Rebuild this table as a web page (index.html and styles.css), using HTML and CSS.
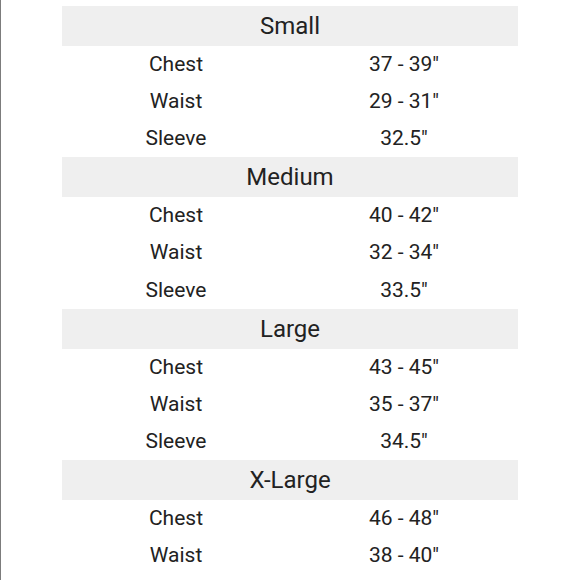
FILE: index.html
```
<!DOCTYPE html>
<html lang="en">
<head>
<meta charset="utf-8">
<title>Size Chart</title>
<link rel="stylesheet" href="styles.css">
</head>
<body>
<div class="page">
  <div class="chart">
    <section class="group">
      <div class="size">Small</div>
      <div class="row"><span>Chest</span><span>37 - 39"</span></div>
      <div class="row"><span>Waist</span><span>29 - 31"</span></div>
      <div class="row"><span>Sleeve</span><span>32.5"</span></div>
    </section>
    <section class="group">
      <div class="size">Medium</div>
      <div class="row"><span>Chest</span><span>40 - 42"</span></div>
      <div class="row"><span>Waist</span><span>32 - 34"</span></div>
      <div class="row"><span>Sleeve</span><span>33.5"</span></div>
    </section>
    <section class="group">
      <div class="size">Large</div>
      <div class="row"><span>Chest</span><span>43 - 45"</span></div>
      <div class="row"><span>Waist</span><span>35 - 37"</span></div>
      <div class="row"><span>Sleeve</span><span>34.5"</span></div>
    </section>
    <section class="group">
      <div class="size">X-Large</div>
      <div class="row"><span>Chest</span><span>46 - 48"</span></div>
      <div class="row"><span>Waist</span><span>38 - 40"</span></div>
    </section>
  </div>
</div>
</body>
</html>
```
FILE: styles.css
```
html, body {
  margin: 0;
  padding: 0;
  background: #ffffff;
}
body {
  font-family: Roboto, "Liberation Sans", sans-serif;
  color: #222222;
  overflow: hidden;
}
.page {
  height: 580px;
  border-left: 1px solid #7c7c7c;
  box-sizing: border-box;
  padding: 6px 0 0 61px;
}
.chart {
  width: 456px;
  display: flex;
  flex-direction: column;
}
.size {
  height: 40px;
  line-height: 40px;
  background: #efefef;
  text-align: center;
  font-size: 24px;
}
.row {
  height: 37.11px;
  line-height: 37px;
  display: grid;
  grid-template-columns: 1fr 1fr;
  font-size: 21px;
  text-align: center;
}
```
